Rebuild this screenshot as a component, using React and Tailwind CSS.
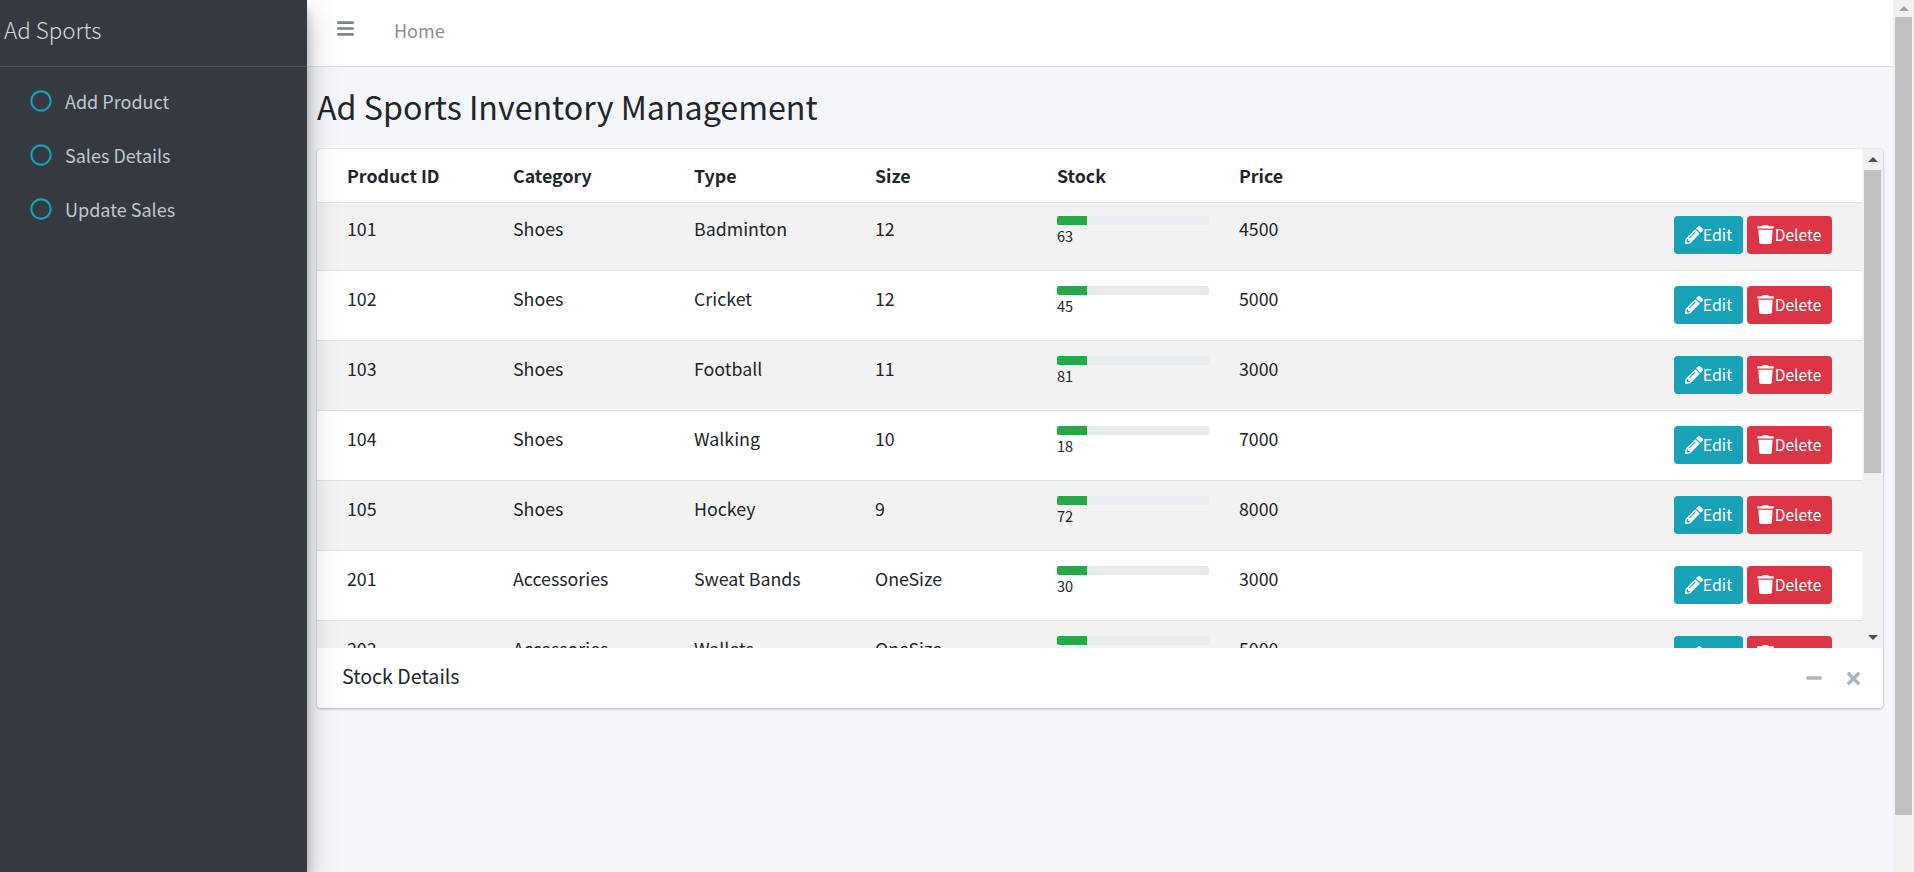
import React from "react";
import { FaBars, FaRegCircle, FaPencilAlt, FaTrash, FaMinus, FaTimes } from "react-icons/fa";

const rows = [
  ["101", "Shoes", "Badminton", "12", "63", "4500"],
  ["102", "Shoes", "Cricket", "12", "45", "5000"],
  ["103", "Shoes", "Football", "11", "81", "3000"],
  ["104", "Shoes", "Walking", "10", "18", "7000"],
  ["105", "Shoes", "Hockey", "9", "72", "8000"],
  ["201", "Accessories", "Sweat Bands", "OneSize", "30", "3000"],
  ["202", "Accessories", "Wallets", "OneSize", "25", "5000"],
];

function Arrow({ up, color }) {
  return (
    <svg width="10" height="5" viewBox="0 0 10 5" className="block">
      <path d={up ? "M5 0L10 5H0Z" : "M0 0H10L5 5Z"} fill={color} />
    </svg>
  );
}

function NavItem({ children }) {
  return (
    <div className="flex h-[54px] items-center pl-[30px] text-[18px] text-[#c2c7d0]">
      <FaRegCircle className="mr-[13px] text-[22px] text-[#17a2b8]" />
      <span className="leading-[26px]">{children}</span>
    </div>
  );
}

function Row({ r, i }) {
  return (
    <div className={`flex shrink-0 border-b border-[#dee2e6] text-[17.8px] leading-[24px] ${i === 0 ? "h-[68px] pt-[13px]" : "h-[70px] pt-[15px]"} ${i % 2 === 0 ? "bg-[#f2f2f2]" : "bg-white"}`}>
      <div className="w-[167px] pl-[30px]">{r[0]}</div>
      <div className="w-[181px] pl-[29px]">{r[1]}</div>
      <div className="w-[181px] pl-[29px]">{r[2]}</div>
      <div className="w-[182px] pl-[29px]">{r[3]}</div>
      <div className="w-[182px] pl-[29px]">
        <div className="h-[9px] w-[152px] rounded-[2px] bg-[#e9ecef]">
          <div className="h-[9px] w-[30px] rounded-l-[2px] bg-[#28a745]" />
        </div>
        <div className="mt-[1px] text-[14.6px] leading-[20px]">{r[4]}</div>
      </div>
      <div className="w-[160px] pl-[29px]">{r[5]}</div>
      <div className="flex flex-1 justify-end gap-[4px] pr-[30px]">
        <button className="flex h-[38px] w-[69px] items-center justify-center rounded-[4px] bg-[#17a2b8] pb-[2px] text-[16px] text-white">
          <FaPencilAlt className="mt-[2px] text-[18px]" />Edit
        </button>
        <button className="flex h-[38px] w-[85px] items-center justify-center rounded-[4px] bg-[#dc3545] pb-[2px] pr-[2px] text-[15.6px] text-white">
          <FaTrash className="mt-[1px] text-[19px]" />Delete
        </button>
      </div>
    </div>
  );
}

export default function App() {
  return (
    <div className="flex h-screen w-full overflow-hidden bg-[#f4f6f9] font-['Noto_Sans_CJK_SC','Noto_Sans',sans-serif] text-[#212529]">
      <aside className="relative z-10 w-[307px] shrink-0 bg-[#343a40] shadow-[0_14px_28px_rgba(0,0,0,0.25),0_10px_10px_rgba(0,0,0,0.22)]">
        <div className="flex h-[67px] items-center border-b border-[#4b545c] pb-[6px] pl-[4px] text-[22.4px] font-light text-[#d4d6d8]">
          Ad Sports
        </div>
        <nav className="pt-[7px]">
          <NavItem>Add Product</NavItem>
          <NavItem>Sales Details</NavItem>
          <NavItem>Update Sales</NavItem>
        </nav>
      </aside>

      <main className="flex min-w-0 flex-1 flex-col">
        <header className="flex h-[67px] shrink-0 items-center border-b border-[#dee2e6] bg-white">
          <FaBars className="mb-[10px] ml-[29px] text-[19px] text-[#7f8488]" />
          <span className="mb-[5px] ml-[39px] text-[18px] text-[#8a8f94]">Home</span>
        </header>
        <h1 className="ml-[10px] mt-[19px] text-[32.2px] font-normal leading-[40px] text-[#212529]">
          Ad Sports Inventory Management
        </h1>
        <section className="ml-[10px] mr-[10px] mt-[23px] flex h-[559px] shrink-0 flex-col overflow-hidden rounded-[4px] bg-white shadow-[0_0_1px_rgba(0,0,0,0.2),0_1px_3px_rgba(0,0,0,0.25)]">
          <div className="flex h-[499px] shrink-0 overflow-hidden">
            <div className="flex min-w-0 flex-1 flex-col overflow-hidden">
              <div className="flex h-[54px] shrink-0 items-center border-b border-[#dee2e6] text-[17.8px] font-bold">
                <div className="w-[167px] pl-[30px]">Product ID</div>
                <div className="w-[181px] pl-[29px]">Category</div>
                <div className="w-[181px] pl-[29px]">Type</div>
                <div className="w-[182px] pl-[29px]">Size</div>
                <div className="w-[182px] pl-[29px]">Stock</div>
                <div className="w-[160px] pl-[29px]">Price</div>
              </div>
              {rows.map((r, i) => (
                <Row key={r[0]} r={r} i={i} />
              ))}
            </div>
            <div className="flex w-[21px] shrink-0 flex-col bg-[#f1f1f1]">
              <div className="flex h-[21px] items-center justify-center"><Arrow up color="#505050" /></div>
              <div className="mx-[2px] h-[303px] bg-[#c1c1c1]" />
              <div className="flex-1" />
              <div className="flex h-[21px] items-center justify-center"><Arrow color="#505050" /></div>
            </div>
          </div>
          <footer className="flex h-[60px] flex-1 items-center bg-white pl-[25px] pr-[20px] text-[19.6px]">
            <span className="mb-[4px]">Stock Details</span>
            <span className="flex-1" />
            <FaMinus className="text-[18px] text-[#adb5bd]" />
            <FaTimes className="ml-[21px] text-[19px] text-[#adb5bd]" />
          </footer>
        </section>
      </main>

      <div className="flex w-[21px] shrink-0 flex-col bg-[#f1f1f1]">
        <div className="flex h-[17px] items-center justify-center"><Arrow up color="#a3a3a3" /></div>
        <div className="mx-[2px] h-[798px] bg-[#c1c1c1]" />
      </div>
    </div>
  );
}
